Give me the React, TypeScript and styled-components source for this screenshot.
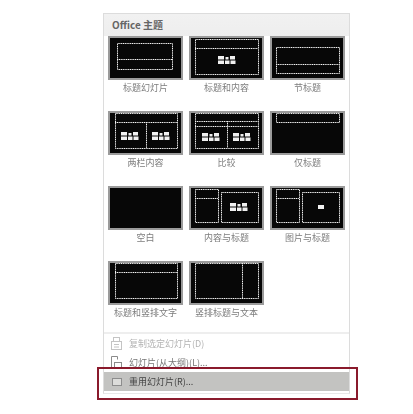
import React from 'react';
import styled, { createGlobalStyle } from 'styled-components';

const GlobalStyle = createGlobalStyle`
    html, body {
        margin: 0;
        padding: 0;
        background: #fff;
    }
    body {
        font-family: "Noto Sans CJK SC", "Liberation Sans", sans-serif;
    }
`;

const Page = styled.div`
    width: 413px;
    height: 414px;
    padding: 13px 0 0 103px;
    box-sizing: border-box;
    overflow: hidden;
    filter: blur(0.35px);
`;

const Panel = styled.div`
    width: 247px;
    height: 381px;
    box-sizing: border-box;
    border: 1px solid #dcdcdc;
    border-bottom-color: #e8e8e8;
    display: flex;
    flex-direction: column;
`;

const Title = styled.div`
    height: 22px;
    padding-left: 8px;
    background: linear-gradient(#f1f1f1, #eeeeee);
    color: #666;
    font-size: 10px;
    font-weight: 700;
    line-height: 22px;
`;

const Grid = styled.div`
    display: grid;
    grid-template-columns: repeat(3, 75px);
    grid-auto-rows: 75px;
    column-gap: 6px;
    padding-left: 4px;
    height: 296px;
`;

const Tile = styled.div`
    display: flex;
    flex-direction: column;
    align-items: center;
`;

const Thumb = styled.svg`
    display: block;
    width: 75px;
    height: 44px;
    background: #070707;
    outline: 2px solid #9b9b9b;
    outline-offset: -2px;
`;

const Label = styled.div`
    margin-top: 1px;
    color: #7d7d7d;
    font-size: 9px;
    line-height: 13px;
    white-space: nowrap;
`;

const Menu = styled.div`
    border-top: 2px solid #eeeeee;
    display: flex;
    flex-direction: column;
`;

const Item = styled.div<{ $active?: boolean; $muted?: boolean }>`
    position: relative;
    height: 19px;
    display: flex;
    align-items: center;
    gap: 6px;
    padding-left: 6px;
    background: ${(p) => (p.$active ? '#c3c3c1' : 'transparent')};
    color: ${(p) => (p.$muted ? '#b4b4b4' : p.$active ? '#444' : '#777')};
    font-size: 9px;
    white-space: nowrap;
`;

const Callout = styled.div`
    position: absolute;
    left: -7px;
    right: -9px;
    top: -5px;
    bottom: -9px;
    border: 2px solid #8a1a2c;
    pointer-events: none;
`;

const DOT = '#f4f4f4';

const Line = ({ x1, y1, x2, y2 }: { x1: number; y1: number; x2: number; y2: number }) => (
    <line x1={x1} y1={y1} x2={x2} y2={y2} stroke={DOT} strokeWidth="1" strokeDasharray="1.2 0.6" />
);

const Box = ({ x, y, w, h }: { x: number; y: number; w: number; h: number }) => (
    <rect x={x + 0.5} y={y + 0.5} width={w} height={h} fill="none" stroke={DOT} strokeWidth="1" strokeDasharray="1.2 0.6" />
);

// little table / chart / picture glyphs of a content placeholder
const Glyphs = ({ cx, cy }: { cx: number; cy: number }) => (
    <g fill="#f0f0f0">
        <rect x={cx - 9} y={cy - 4} width="6" height="3.5" />
        <rect x={cx - 1.5} y={cy - 3} width="3" height="2.5" />
        <rect x={cx + 3} y={cy - 4} width="5" height="3.5" />
        <rect x={cx - 9} y={cy + 0.5} width="6" height="3.5" />
        <rect x={cx - 2} y={cy + 0.5} width="4.5" height="3.5" />
        <rect x={cx + 3.5} y={cy + 0.5} width="5" height="3.5" />
    </g>
);

const layouts: { name: string; art: React.ReactNode }[] = [
    {
        name: '标题幻灯片',
        art: (
            <>
                <Box x={9} y={7} w={55} h={26} />
                <Line x1={9} y1={23.5} x2={64} y2={23.5} />
            </>
        ),
    },
    {
        name: '标题和内容',
        art: (
            <>
                <Box x={6} y={3} w={63} h={35} />
                <Line x1={6} y1={12.5} x2={69} y2={12.5} />
                <Glyphs cx={38} cy={24} />
            </>
        ),
    },
    {
        name: '节标题',
        art: (
            <>
                <Box x={6} y={11} w={63} h={26} />
                <Line x1={6} y1={28.5} x2={69} y2={28.5} />
            </>
        ),
    },
    {
        name: '两栏内容',
        art: (
            <>
                <Box x={7} y={2} w={62} h={35} />
                <Line x1={7} y1={11.5} x2={69} y2={11.5} />
                <Line x1={38.5} y1={11} x2={38.5} y2={37} />
                <Glyphs cx={22} cy={25} />
                <Glyphs cx={53} cy={25} />
            </>
        ),
    },
    {
        name: '比较',
        art: (
            <>
                <Box x={6} y={2} w={63} h={35} />
                <Line x1={6} y1={10.5} x2={69} y2={10.5} />
                <Line x1={6} y1={15.5} x2={69} y2={15.5} />
                <Line x1={38.5} y1={10} x2={38.5} y2={37} />
                <Glyphs cx={22} cy={26} />
                <Glyphs cx={53} cy={26} />
            </>
        ),
    },
    {
        name: '仅标题',
        art: <Box x={6} y={2} w={63} h={9} />,
    },
    {
        name: '空白',
        art: null,
    },
    {
        name: '内容与标题',
        art: (
            <>
                <Box x={6} y={3} w={23} h={33} />
                <Line x1={6} y1={12.5} x2={29} y2={12.5} />
                <Box x={32} y={6} w={37} h={30} />
                <Glyphs cx={50} cy={21} />
            </>
        ),
    },
    {
        name: '图片与标题',
        art: (
            <>
                <Box x={6} y={3} w={23} h={33} />
                <Line x1={6} y1={12.5} x2={29} y2={12.5} />
                <Box x={32} y={6} w={37} h={30} />
                <rect x={48} y={19} width="6" height="4" fill="#f0f0f0" />
            </>
        ),
    },
    {
        name: '标题和竖排文字',
        art: (
            <>
                <Box x={7} y={2} w={62} h={35} />
                <Line x1={7} y1={11.5} x2={69} y2={11.5} />
            </>
        ),
    },
    {
        name: '竖排标题与文本',
        art: (
            <>
                <Box x={6} y={2} w={63} h={35} />
                <Line x1={53.5} y1={2} x2={53.5} y2={37} />
            </>
        ),
    },
];

const CopyIcon = () => (
    <svg width="13" height="14" viewBox="0 0 13 14" fill="none" stroke="#c4c4c4" strokeWidth="1">
        <rect x="3.5" y="0.5" width="6" height="4" />
        <rect x="1.5" y="4.5" width="10" height="8" />
        <path d="M4 7.5h5M4 10h5" />
    </svg>
);

const OutlineIcon = () => (
    <svg width="13" height="14" viewBox="0 0 13 14" fill="none" stroke="#8a8a8a" strokeWidth="1">
        <path d="M1.5 12.5V0.5h6v3" />
        <rect x="4.5" y="6.5" width="7" height="6" />
    </svg>
);

const ReuseIcon = () => (
    <svg width="13" height="14" viewBox="0 0 13 14" fill="#dcdcda" stroke="#8d8d8d" strokeWidth="1">
        <rect x="2.5" y="3.5" width="9" height="7" />
    </svg>
);

export default function App() {
    return (
        <Page>
            <GlobalStyle />
            <Panel>
                <Title>Office 主题</Title>
                <Grid>
                    {layouts.map((l) => (
                        <Tile key={l.name}>
                            <Thumb viewBox="0 0 75 44">{l.art}</Thumb>
                            <Label>{l.name}</Label>
                        </Tile>
                    ))}
                </Grid>
                <Menu>
                    <Item $muted>
                        <CopyIcon />
                        复制选定幻灯片(D)
                    </Item>
                    <Item>
                        <OutlineIcon />
                        幻灯片(从大纲)(L)...
                    </Item>
                    <Item $active>
                        <ReuseIcon />
                        重用幻灯片(R)...
                        <Callout />
                    </Item>
                </Menu>
            </Panel>
        </Page>
    );
}
